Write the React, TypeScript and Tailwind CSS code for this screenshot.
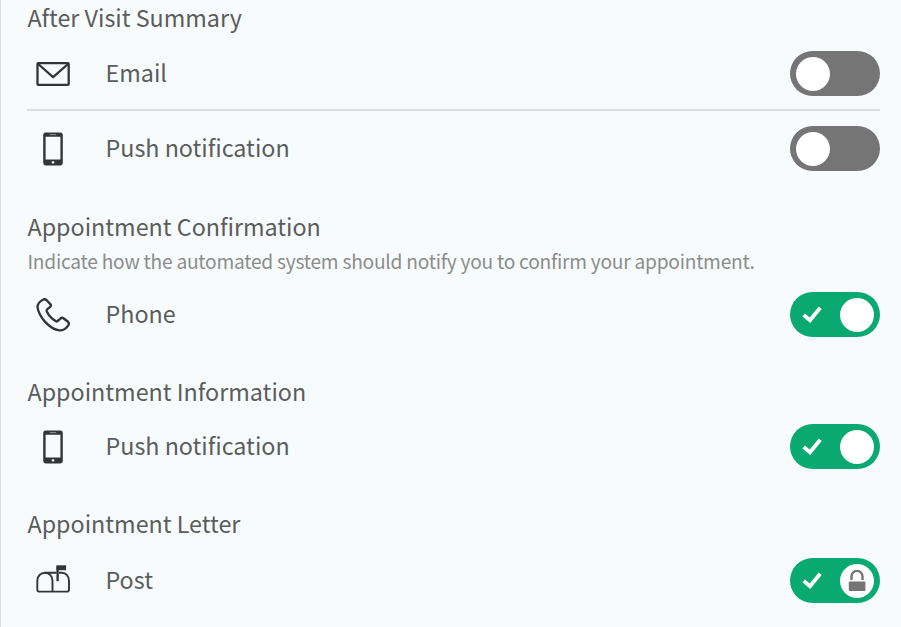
import { useState } from "react";
import type { ReactNode } from "react";

type Channel = "email" | "push" | "phone" | "post";

type Preference = {
  channel: Channel;
  enabled: boolean;
  locked?: boolean;
};

type PreferenceGroup = {
  title: string;
  hint?: string;
  spacing: string;
  headingHeight: string;
  preferences: Preference[];
};

const CHANNEL_LABEL: Record<Channel, string> = {
  email: "Email",
  push: "Push notification",
  phone: "Phone",
  post: "Post",
};

const GROUPS: PreferenceGroup[] = [
  {
    title: "After Visit Summary",
    spacing: "pt-0",
    headingHeight: "h-9",
    preferences: [
      { channel: "email", enabled: false },
      { channel: "push", enabled: false },
    ],
  },
  {
    title: "Appointment Confirmation",
    hint: "Indicate how the automated system should notify you to confirm your appointment.",
    spacing: "pt-[23px]",
    headingHeight: "h-9",
    preferences: [{ channel: "phone", enabled: true }],
  },
  {
    title: "Appointment Information",
    spacing: "pt-[22px]",
    headingHeight: "h-[35px]",
    preferences: [{ channel: "push", enabled: true }],
  },
  {
    title: "Appointment Letter",
    spacing: "pt-[22px]",
    headingHeight: "h-[37px]",
    preferences: [{ channel: "post", enabled: true, locked: true }],
  },
];

const CHANNEL_ICON: Record<Channel, ReactNode> = {
  email: (
    <g fill="none" stroke="currentColor" strokeWidth="2.3" strokeLinejoin="round">
      <rect x="1.5" y="6.2" width="31.2" height="21.6" rx="0.8" />
      <path d="M2.2 7l14.9 13.2L32 7" />
    </g>
  ),
  push: (
    <>
      <path
        fill="currentColor"
        fillRule="evenodd"
        d="M9.6 0.6h14.8a2.4 2.4 0 0 1 2.4 2.4v28a2.4 2.4 0 0 1-2.4 2.4H9.6A2.4 2.4 0 0 1 7.2 31V3a2.4 2.4 0 0 1 2.4-2.4zM9.6 4.7v22.9h14.8V4.7z"
      />
      <path d="M13.8 2.6h6.4" stroke="#9a9c9d" strokeWidth="0.9" />
      <rect x="15.7" y="29.2" width="2.6" height="2.4" rx="0.8" fill="#f8fbfc" />
    </>
  ),
  phone: (
    <path
      d="M6.9 1.7C4.3 3 1.5 6.2 1.5 9.4C3.2 19.4 13.5 31 23.3 32.4C26.8 32.6 30.8 30.1 32.6 26.7C33.1 25.5 32.9 24.6 32 23.8L27.4 20.2C26.3 19.4 25.5 19.6 24.5 20.5L22.2 22.7C21.4 23.5 20.6 23.7 19.5 23C15.7 20.5 12.6 17.2 10.8 13.4C10.5 12.6 10.7 11.9 11.4 11.2L14.1 8.9C15 8 15.2 7.2 14.6 6.3L10.4 2C9.3 1 8.1 1 6.9 1.7Z"
      fill="none"
      stroke="currentColor"
      strokeWidth="2.4"
      strokeLinejoin="round"
    />
  ),
  post: (
    <g fill="none" stroke="currentColor" strokeWidth="1.9" strokeLinejoin="round">
      <path d="M20.5 8.8H8.9c-4.2 0-7.6 3.3-7.6 8v8.6c0 1.5.7 2.2 2.1 2.2h27.4c1.5 0 2.2-.7 2.2-2.2v-8.6c0-4.7-3-8-7.1-8H23" />
      <path d="M8.9 8.8c4.6 0 7.6 3.3 7.6 8v10.8" />
      <path d="M21.6 17.2V2" strokeWidth="2.4" />
      <path d="M20.5 1.3h9.6v4.9h-9.6z" fill="currentColor" stroke="none" />
    </g>
  ),
};

function CheckIcon() {
  return (
    <svg className="ml-[12px] h-[18px] w-5" viewBox="0 0 20 18" fill="none" aria-hidden>
      <path d="M1.7 9L8 14.2L18.2 1.8" stroke="white" strokeWidth="3.8" />
    </svg>
  );
}

function LockIcon() {
  return (
    <svg className="h-[22px] w-[18px]" viewBox="0 0 18 22" fill="none" aria-hidden>
      <path d="M3.5 10V6.4a5.5 5.5 0 0 1 11 0V10" stroke="#757575" strokeWidth="2.4" />
      <rect x="0.8" y="11.4" width="16.6" height="9.6" rx="0.8" fill="#757575" />
    </svg>
  );
}

type ToggleProps = {
  label: string;
  checked: boolean;
  locked?: boolean;
  onChange: () => void;
};

function Toggle({ label, checked, locked, onChange }: ToggleProps) {
  return (
    <button
      type="button"
      role="switch"
      aria-label={label}
      aria-checked={checked}
      disabled={locked}
      onClick={onChange}
      className={`flex h-[45px] w-[90.5px] shrink-0 items-center rounded-full ${
        checked ? "justify-between bg-[#0aa971] pr-[6px]" : "bg-[#757575] pl-[6px]"
      }`}
    >
      {checked ? <CheckIcon /> : null}
      <span className="flex size-[34px] items-center justify-center rounded-full bg-white">
        {locked ? <LockIcon /> : null}
      </span>
    </button>
  );
}

export default function App() {
  const [groups, setGroups] = useState(GROUPS);

  const toggle = (title: string, channel: Channel) => {
    setGroups((prev) =>
      prev.map((group) =>
        group.title !== title
          ? group
          : {
              ...group,
              preferences: group.preferences.map((p) =>
                p.channel === channel ? { ...p, enabled: !p.enabled } : p,
              ),
            },
      ),
    );
  };

  return (
    <main className="h-screen overflow-hidden border-l border-[#d9dddf] bg-[#f8fbfc] pr-[21px] pl-[26px] font-['Noto_Sans_CJK_SC','Noto_Sans',sans-serif] text-[23.3px] text-[#5b5d5d]">
      {groups.map((group) => (
        <section key={group.title} className={group.spacing}>
          <h2 className={`pl-[0.5px] leading-[34px] whitespace-nowrap ${group.headingHeight}`}>
            {group.title}
          </h2>
          {group.hint ? (
            <p className="h-8 pl-[0.5px] text-[19.2px] leading-[33px] tracking-[-0.25px] whitespace-nowrap text-[#8b8d8d]">
              {group.hint}
            </p>
          ) : null}
          <ul className="divide-y-2 divide-[#dcdfe1]">
            {group.preferences.map((preference) => (
              <li key={preference.channel} className="flex h-[75px] items-center not-last:pt-[2px]">
                <svg
                  className="ml-[9px] size-[34px] shrink-0 text-[#333535]"
                  viewBox="0 0 34 34"
                  aria-hidden
                >
                  {CHANNEL_ICON[preference.channel]}
                </svg>
                <span className="ml-[35.5px] flex-1 pb-1 leading-9">
                  {CHANNEL_LABEL[preference.channel]}
                </span>
                <Toggle
                  label={`${group.title}: ${CHANNEL_LABEL[preference.channel]}`}
                  checked={preference.enabled}
                  locked={preference.locked}
                  onChange={() => toggle(group.title, preference.channel)}
                />
              </li>
            ))}
          </ul>
        </section>
      ))}
    </main>
  );
}
